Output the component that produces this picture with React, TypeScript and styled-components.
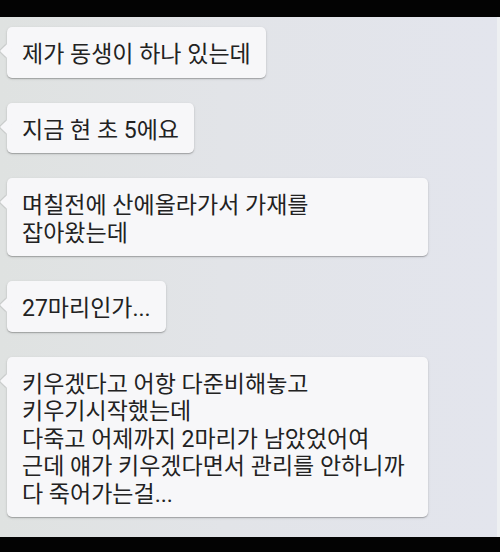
import React from "react";
import styled, { createGlobalStyle } from "styled-components";

const GlobalStyle = createGlobalStyle`
  html, body {
    margin: 0;
    padding: 0;
    background: #000;
  }
  * {
    box-sizing: border-box;
  }
`;

const Screen = styled.div`
  width: 500px;
  height: 552px;
  display: flex;
  flex-direction: column;
  background: #000;
`;

const BlackBar = styled.div<{ $h: number }>`
  height: ${(p) => p.$h}px;
  flex-shrink: 0;
  background: #030303;
`;

const ChatArea = styled.div`
  flex: 1;
  display: flex;
  flex-direction: column;
  align-items: flex-start;
  gap: 25px;
  padding: 10px 0 0 7px;
  background: linear-gradient(to right, #dfe2e1 0%, #e2e4e8 45%, #e3e5ed 100%);
  border-right: 3px solid #eef0f2;
`;

const Bubble = styled.div<{ $wide?: boolean }>`
  position: relative;
  width: ${(p) => (p.$wide ? "421px" : "auto")};
  padding: 14px 15px 9px 15px;
  background: #f7f7f9;
  border-radius: 5px;
  box-shadow: 0 1px 1px rgba(0, 0, 0, 0.22), 0 1px 3px rgba(0, 0, 0, 0.12);
  font-family: Roboto, "Noto Sans CJK KR", sans-serif;
  font-size: 23px;
  line-height: 27.5px;
  color: #222;

  &::before {
    content: "";
    position: absolute;
    left: -5px;
    top: 19px;
    width: 10px;
    height: 10px;
    background: #f7f7f9;
    transform: rotate(45deg);
    box-shadow: -1px 1px 1px rgba(0, 0, 0, 0.12);
    border-radius: 1px;
  }
`;

const Line = styled.div`
  position: relative;
  white-space: nowrap;
`;

const messages: { lines: string[]; wide?: boolean }[] = [
  { lines: ["제가 동생이 하나 있는데"] },
  { lines: ["지금 현 초 5에요"] },
  { lines: ["며칠전에 산에올라가서 가재를", "잡아왔는데"], wide: true },
  { lines: ["27마리인가..."] },
  {
    lines: [
      "키우겠다고 어항 다준비해놓고",
      "키우기시작했는데",
      "다죽고 어제까지 2마리가 남았었어여",
      "근데 얘가 키우겠다면서 관리를 안하니까",
      "다 죽어가는걸...",
    ],
    wide: true,
  },
];

function App() {
  return (
    <>
      <GlobalStyle />
      <Screen>
        <BlackBar $h={17} />
        <ChatArea>
          {messages.map((msg, index) => (
            <Bubble key={index} $wide={msg.wide}>
              {msg.lines.map((line, i) => (
                <Line key={i}>{line}</Line>
              ))}
            </Bubble>
          ))}
        </ChatArea>
        <BlackBar $h={15} />
      </Screen>
    </>
  );
}

export default App;
